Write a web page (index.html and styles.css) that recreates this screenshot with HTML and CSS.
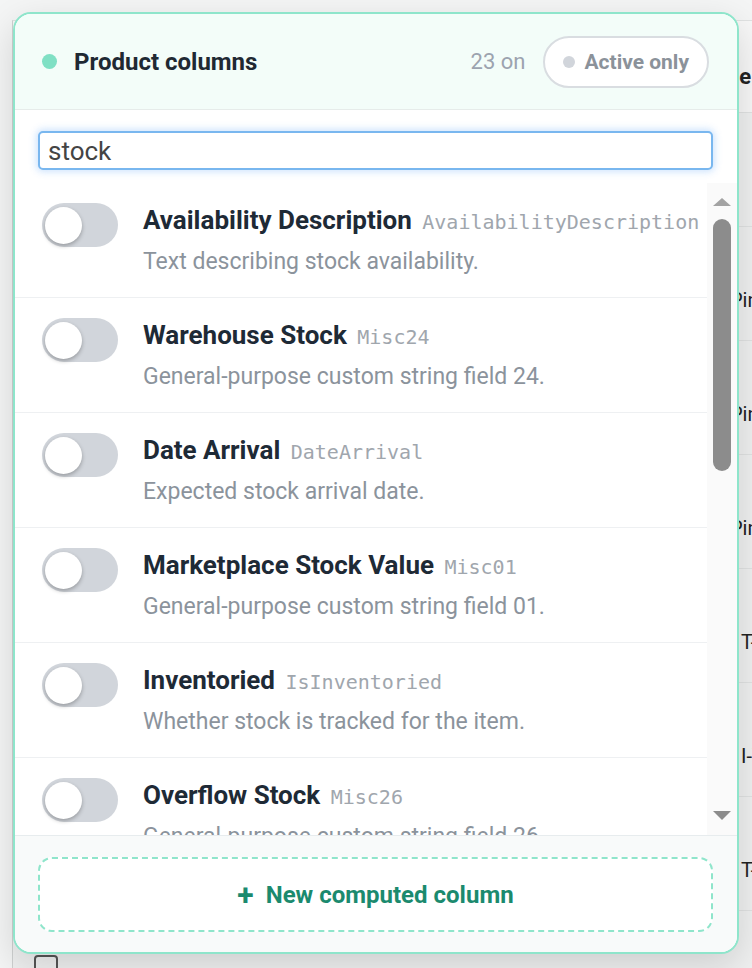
FILE: index.html
```html
<!DOCTYPE html>
<html lang="en">
<head>
  <meta charset="UTF-8" />
  <meta name="viewport" content="width=device-width, initial-scale=1.0" />
  <title>Product columns</title>
  <link rel="stylesheet" href="styles.css">
</head>
<body>
  <!-- product table behind the column picker -->
  <div class="page">
    <div class="grid">
      <div class="grid-row grid-head"><span class="cell-name head-name">Name</span></div>
      <div class="grid-row"><span class="check"></span></div>
      <div class="grid-row"><span class="check"></span><span class="cell-name">Pin</span></div>
      <div class="grid-row"><span class="check"></span><span class="cell-name">Pin</span></div>
      <div class="grid-row"><span class="check"></span><span class="cell-name">Pin</span></div>
      <div class="grid-row"><span class="check"></span><span class="cell-name shift">T-</span></div>
      <div class="grid-row"><span class="check"></span><span class="cell-name shift">I-T</span></div>
      <div class="grid-row"><span class="check"></span><span class="cell-name shift">T-</span></div>
      <div class="grid-row"><span class="check"></span></div>
    </div>
  </div>

  <div class="picker">
    <div class="picker-head">
      <span class="head-dot"></span>
      <span class="head-title">Product columns</span>
      <span class="head-count">23 on</span>
      <button class="pill"><span class="pill-dot"></span>Active only</button>
    </div>

    <div class="search">
      <input type="text" class="search-input" value="stock">
    </div>

    <div class="list">
      <div class="rows">
        <div class="row">
          <span class="toggle"><span class="knob"></span></span>
          <div class="row-text">
            <div class="row-title">Availability Description <span class="row-key">AvailabilityDescription</span></div>
            <div class="row-desc">Text describing stock availability.</div>
          </div>
        </div>
        <div class="row">
          <span class="toggle"><span class="knob"></span></span>
          <div class="row-text">
            <div class="row-title">Warehouse Stock <span class="row-key">Misc24</span></div>
            <div class="row-desc">General-purpose custom string field 24.</div>
          </div>
        </div>
        <div class="row">
          <span class="toggle"><span class="knob"></span></span>
          <div class="row-text">
            <div class="row-title">Date Arrival <span class="row-key">DateArrival</span></div>
            <div class="row-desc">Expected stock arrival date.</div>
          </div>
        </div>
        <div class="row">
          <span class="toggle"><span class="knob"></span></span>
          <div class="row-text">
            <div class="row-title">Marketplace Stock Value <span class="row-key">Misc01</span></div>
            <div class="row-desc">General-purpose custom string field 01.</div>
          </div>
        </div>
        <div class="row">
          <span class="toggle"><span class="knob"></span></span>
          <div class="row-text">
            <div class="row-title">Inventoried <span class="row-key">IsInventoried</span></div>
            <div class="row-desc">Whether stock is tracked for the item.</div>
          </div>
        </div>
        <div class="row">
          <span class="toggle"><span class="knob"></span></span>
          <div class="row-text">
            <div class="row-title">Overflow Stock <span class="row-key">Misc26</span></div>
            <div class="row-desc">General-purpose custom string field 26.</div>
          </div>
        </div>
      </div>
      <div class="scrollbar">
        <span class="arrow-up"></span>
        <span class="thumb"></span>
        <span class="arrow-down"></span>
      </div>
    </div>

    <div class="picker-foot">
      <button class="add-btn"><span class="plus">+</span>New computed column</button>
    </div>
  </div>
</body>
</html>
```

FILE: styles.css
```css
body {
  margin: 0;
  font-family: Roboto, 'Liberation Sans', Arial, sans-serif;
  background-color: #f4f5f5;
  color: #1f2933;
  overflow: hidden;
}
.page {
  height: 968px;
  padding: 20px 0 0 12px;
  box-sizing: border-box;
  overflow: hidden;
}
.grid {
  border-left: 1px solid #cfd1d1;
  border-top: 1px solid #e0e2e2;
  width: 740px;
  overflow: hidden;
}
.grid-row {
  display: flex;
  align-items: flex-start;
  height: 113px;
  padding-left: 21px;
  border-bottom: 1px solid #e0e2e2;
  background: #eff0f0;
  font-size: 20px;
  color: #222;
}
.grid-head {
  height: 91px;
  background: #f7f7f7;
  font-weight: bold;
}
.check {
  flex: none;
  width: 24px;
  height: 24px;
  margin-top: 44px;
  border: 2px solid #555;
  border-radius: 4px;
  box-sizing: border-box;
}
.cell-name {
  margin: 61px 0 0 672px;
  white-space: nowrap;
}
.cell-name.shift {
  margin-left: 683px;
}
.head-name {
  margin: 43px 0 0 659px;
  font-size: 22px;
}

/* column picker popover */
.picker {
  position: absolute;
  left: 13px;
  top: 12px;
  width: 726px;
  height: 942px;
  box-sizing: border-box;
  border: 2px solid #8ee5cb;
  border-radius: 18px;
  background: #fff;
  box-shadow: 0 12px 36px rgba(0, 0, 0, 0.14);
  display: flex;
  flex-direction: column;
  overflow: hidden;
}
.picker-head {
  height: 95px;
  flex: none;
  display: flex;
  align-items: center;
  padding: 0 28px 0 27px;
  background: #f3fdf9;
  border-bottom: 1px solid #e6ecea;
}
.head-dot {
  width: 15px;
  height: 15px;
  border-radius: 50%;
  background: #7fe0c4;
  margin-right: 17px;
}
.head-title {
  font-size: 24px;
  font-weight: bold;
  color: #1f2933;
  flex: 1;
}
.head-count {
  font-size: 22px;
  color: #9ca3af;
  margin-right: 18px;
}
.pill {
  height: 52px;
  display: flex;
  align-items: center;
  padding: 0 18px;
  border: 2px solid #d9dde1;
  border-radius: 26px;
  background: #fff;
  font-family: inherit;
  font-size: 21px;
  font-weight: bold;
  color: #8b929a;
}
.pill-dot {
  width: 12px;
  height: 12px;
  border-radius: 50%;
  background: #d1d5db;
  margin-right: 9px;
}
.search {
  flex: none;
  padding: 21px 24px 13px 23px;
}
.search-input {
  width: 100%;
  height: 39px;
  box-sizing: border-box;
  border: 2px solid #79b7ef;
  border-radius: 5px;
  padding: 0 8px;
  font-family: inherit;
  font-size: 26px;
  color: #444;
  outline: none;
  box-shadow: 0 0 7px 2px rgba(96, 165, 250, 0.3);
}
.list {
  height: 652px;
  flex: none;
  display: flex;
}
.rows {
  flex: 1;
  overflow: hidden;
}
.row {
  height: 115px;
  box-sizing: border-box;
  display: flex;
  align-items: flex-start;
  gap: 25px;
  padding: 20px 10px 0 27px;
  border-bottom: 1px solid #eef0f2;
}
.toggle {
  flex: none;
  width: 76px;
  height: 44px;
  border-radius: 22px;
  background: #d1d5db;
  display: flex;
  align-items: center;
  padding: 0 3px;
  box-sizing: border-box;
}
.knob {
  width: 37px;
  height: 37px;
  border-radius: 50%;
  background: #fff;
  box-shadow: 0 2px 4px rgba(0, 0, 0, 0.28);
}
.row-text {
  padding-top: 2px;
  white-space: nowrap;
}
.row-title {
  font-size: 26px;
  line-height: 30px;
  font-weight: bold;
  color: #1e2a36;
}
.row-key {
  font-family: 'DejaVu Sans Mono', 'Liberation Mono', monospace;
  font-size: 20px;
  font-weight: normal;
  color: #a0a6ad;
  margin-left: 4px;
}
.row-desc {
  margin-top: 10px;
  font-size: 23px;
  line-height: 30px;
  color: #8b939c;
}
.scrollbar {
  width: 30px;
  flex: none;
  background: #fafafa;
  display: flex;
  flex-direction: column;
  align-items: center;
  padding: 15px 0;
  box-sizing: border-box;
}
.arrow-up {
  width: 0;
  height: 0;
  border-left: 9px solid transparent;
  border-right: 9px solid transparent;
  border-bottom: 8px solid #a3a3a3;
}
.thumb {
  width: 18px;
  height: 252px;
  margin-top: 13px;
  border-radius: 9px;
  background: #8c8c8c;
}
.arrow-down {
  margin-top: auto;
  width: 0;
  height: 0;
  border-left: 9px solid transparent;
  border-right: 9px solid transparent;
  border-top: 9px solid #8c8c8c;
}
.picker-foot {
  flex: 1;
  padding: 21px 24px 20px 23px;
  background: #f8fafa;
  border-top: 1px solid #e7ecee;
}
.add-btn {
  width: 100%;
  height: 75px;
  border: 2px dashed #8fe5cb;
  border-radius: 14px;
  background: #fff;
  font-family: inherit;
  font-size: 24px;
  font-weight: bold;
  color: #1b8a6e;
  display: flex;
  align-items: center;
  justify-content: center;
}
.plus {
  font-size: 30px;
  line-height: 1;
  margin-right: 12px;
}
```
